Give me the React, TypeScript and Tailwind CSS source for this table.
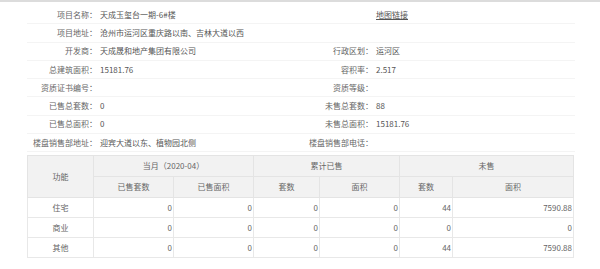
import React from 'react';

type Pair = { label: string; value?: string; link?: boolean };

const infoRows: [Pair, Pair][] = [
  [{ label: '项目名称：', value: '天成玉玺台一期-6#楼' }, { label: '', value: '地图链接', link: true }],
  [{ label: '项目地址：', value: '沧州市运河区重庆路以南、吉林大道以西' }, { label: '' }],
  [{ label: '开发商：', value: '天成晟和地产集团有限公司' }, { label: '行政区划：', value: '运河区' }],
  [{ label: '总建筑面积：', value: '15181.76' }, { label: '容积率：', value: '2.517' }],
  [{ label: '资质证书编号：' }, { label: '资质等级：' }],
  [{ label: '已售总套数：', value: '0' }, { label: '未售总套数：', value: '88' }],
  [{ label: '已售总面积：', value: '0' }, { label: '未售总面积：', value: '15181.76' }],
  [{ label: '楼盘销售部地址：', value: '迎宾大道以东、植物园北侧' }, { label: '楼盘销售部电话：' }],
];

const tableRows = [
  { name: '住宅', cells: ['0', '0', '0', '0', '44', '7590.88'] },
  { name: '商业', cells: ['0', '0', '0', '0', '0', '0'] },
  { name: '其他', cells: ['0', '0', '0', '0', '44', '7590.88'] },
];

function InfoCell({ pair, labelWidth }: { pair: Pair; labelWidth: string }) {
  return (
    <div className="flex items-center">
      <div className={`${labelWidth} shrink-0 text-right text-[#666] whitespace-nowrap`}>{pair.label}</div>
      {pair.link ? (
        <a className="pl-[3px] text-[#555] underline">{pair.value}</a>
      ) : (
        <div className="pl-[3px] text-[#555] whitespace-nowrap">{pair.value}</div>
      )}
    </div>
  );
}

export default function App() {
  return (
    <div
      className="w-[600px] h-[269px] bg-white overflow-hidden text-[8px] leading-[10px]"
      style={{ fontFamily: '"Noto Sans CJK SC", "Noto Sans", sans-serif' }}
    >
      <div className="h-[2px] bg-[#dcdcdc]" />

      {/* 基本信息 */}
      <div className="ml-[27px] w-[548px] mt-[4px]">
        {infoRows.map((row, i) => (
          <div key={i} className="grid grid-cols-2 h-[18.3px] border-b border-[#f4f4f4]">
            <InfoCell pair={row[0]} labelWidth="w-[70px]" />
            <InfoCell pair={row[1]} labelWidth="w-[72px]" />
          </div>
        ))}
      </div>

      {/* 销售统计 */}
      <table className="ml-[27px] mt-[3px] w-[546px] table-fixed border-collapse text-[#666]">
        <colgroup>
          <col className="w-[66px]" />
          <col className="w-[80px]" />
          <col className="w-[80px]" />
          <col className="w-[66px]" />
          <col className="w-[80px]" />
          <col className="w-[53px]" />
          <col className="w-[121px]" />
        </colgroup>
        <thead>
          <tr className="h-[21px] bg-[#f2f2f2]">
            <th rowSpan={2} className="border border-[#e4e4e4] font-normal">功能</th>
            <th colSpan={2} className="border border-[#e4e4e4] font-normal">当月（2020-04）</th>
            <th colSpan={2} className="border border-[#e4e4e4] font-normal">累计已售</th>
            <th colSpan={2} className="border border-[#e4e4e4] font-normal">未售</th>
          </tr>
          <tr className="h-[21px] bg-[#f2f2f2]">
            <th className="border border-[#e4e4e4] font-normal">已售套数</th>
            <th className="border border-[#e4e4e4] font-normal">已售面积</th>
            <th className="border border-[#e4e4e4] font-normal">套数</th>
            <th className="border border-[#e4e4e4] font-normal">面积</th>
            <th className="border border-[#e4e4e4] font-normal">套数</th>
            <th className="border border-[#e4e4e4] font-normal">面积</th>
          </tr>
        </thead>
        <tbody>
          {tableRows.map((r) => (
            <tr key={r.name} className="h-[20px]">
              <td className="border border-[#e8e8e8] text-center">{r.name}</td>
              {r.cells.map((c, j) => (
                <td key={j} className="border border-[#e8e8e8] text-right pr-[1px]">{c}</td>
              ))}
            </tr>
          ))}
        </tbody>
      </table>
    </div>
  );
}
